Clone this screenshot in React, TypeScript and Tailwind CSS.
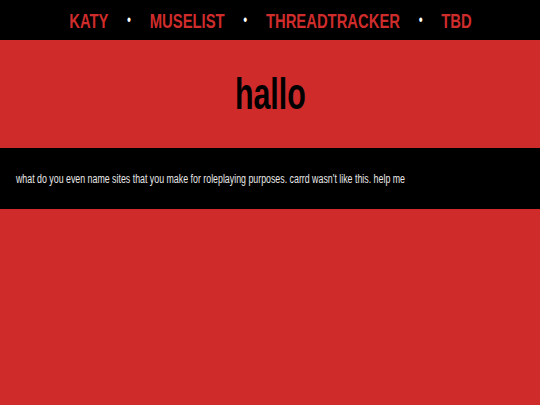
export default function App() {
  const links = ["KATY", "MUSELIST", "THREADTRACKER", "TBD"];
  return (
    <div
      className="min-h-[405px] w-full overflow-hidden bg-[#d02b2b]"
      style={{ fontFamily: '"Liberation Sans", Arial, sans-serif' }}
    >
      {/* top navigation, condensed lettering */}
      <nav className="flex h-10 items-center justify-center bg-black">
        <div className="flex scale-x-[0.705] items-center whitespace-nowrap">
          {links.map((l, i) => (
            <div key={l} className="flex items-center">
              {i > 0 && <span className="mx-[26.5px] text-[16px] text-white">•</span>}
              <a className="text-[21px] font-bold leading-none text-[#cf2c2c]">{l}</a>
            </div>
          ))}
        </div>
      </nav>
      <header className="flex h-[108px] items-center justify-center">
        <h1 className="scale-x-[0.69] text-[44px] font-bold leading-none text-black">hallo</h1>
      </header>
      <section className="flex h-[61px] items-center bg-black px-4">
        <p className="origin-left scale-x-[0.735] whitespace-nowrap text-[12px] text-[#e8e8e8]">
          what do you even name sites that you make for roleplaying purposes. carrd wasn't like this. help me
        </p>
      </section>
    </div>
  );
}
